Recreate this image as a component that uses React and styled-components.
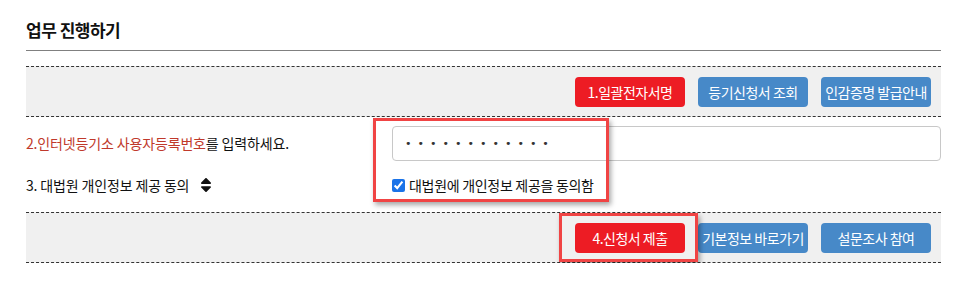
import React from "react";
import styled, { createGlobalStyle } from "styled-components";
import { FaSort } from "react-icons/fa";

const Global = createGlobalStyle`
  html, body { margin: 0; padding: 0; background: #fff; }
  body { font-family: "Noto Sans CJK KR", "Noto Sans", sans-serif; color: #111; }
`;

const Page = styled.div`
  position: relative;
  width: 915px;
  padding: 18px 0 0 26px;
`;

const Title = styled.h2`
  margin: 0;
  font-size: 17px;
  font-weight: 700;
  line-height: 24px;
  letter-spacing: -0.5px;
  padding-bottom: 8px;
  border-bottom: 1px solid #808080;
`;

const Band = styled.div`
  display: flex;
  justify-content: flex-end;
  align-items: center;
  gap: 13px;
  height: 49px;
  padding-right: 10px;
  background: #f0f0f0;
  border-top: 1px dashed #333;
  border-bottom: 1px dashed #333;
  margin-top: ${(p) => p.$mt || 0}px;
`;

const Btn = styled.button`
  width: 110px;
  height: 30px;
  border: 0;
  border-radius: 4px;
  background: ${(p) => (p.$red ? "#ed1c24" : "#4789c8")};
  color: #fff;
  font-family: inherit;
  font-size: 14px;
  letter-spacing: -0.5px;
  padding: 0;
  white-space: nowrap;
`;

const Form = styled.div`
  display: grid;
  grid-template-columns: 366px 1fr;
  grid-template-rows: 52px 32px;
  align-items: center;
  padding-bottom: 11px;
`;

const Label = styled.div`
  font-size: 14px;
  letter-spacing: -0.15px;
  display: flex;
  align-items: center;
  gap: 8px;
`;

const Accent = styled.span`
  color: #c0392b;
`;

const Field = styled.input`
  box-sizing: border-box;
  width: 549px;
  height: 35px;
  border: 1px solid #c8c8c8;
  border-radius: 4px;
  padding: 0 12px;
  font-size: 11px;
  letter-spacing: 6px;
  color: #333;
  outline: none;
  font-family: "DejaVu Sans", sans-serif;
`;

const Check = styled.label`
  display: flex;
  align-items: center;
  gap: 4px;
  font-size: 14px;
  letter-spacing: -0.3px;
  input {
    margin: 0;
    width: 13px;
    height: 13px;
    accent-color: #1a73e8;
  }
`;

const Mark = styled.div`
  position: absolute;
  box-sizing: border-box;
  border: 3px solid #f04444;
  box-shadow: 2px 3px 5px rgba(0, 0, 0, 0.35);
  pointer-events: none;
`;

export default function App() {
  return (
    <>
      <Global />
      <Page>
        <Title>업무 진행하기</Title>
        <Band $mt={15}>
          <Btn $red>1.일괄전자서명</Btn>
          <Btn>등기신청서 조회</Btn>
          <Btn>인감증명 발급안내</Btn>
        </Band>
        <Form>
          <Label>
            <span>
              <Accent>2.인터넷등기소 사용자등록번호</Accent>를 입력하세요.
            </span>
          </Label>
          <Field type="password" defaultValue="123456789012" readOnly />
          <Label>
            3. 대법원 개인정보 제공 동의 <FaSort size={18} />
          </Label>
          <Check>
            <input type="checkbox" defaultChecked /> 대법원에 개인정보 제공을 동의함
          </Check>
        </Form>
        <Band>
          <Btn $red>4.신청서 제출</Btn>
          <Btn>기본정보 바로가기</Btn>
          <Btn>설문조사 참여</Btn>
        </Band>
        <Mark style={{ left: 373, top: 118, width: 236, height: 84 }} />
        <Mark style={{ left: 559, top: 213, width: 139, height: 49 }} />
      </Page>
    </>
  );
}
